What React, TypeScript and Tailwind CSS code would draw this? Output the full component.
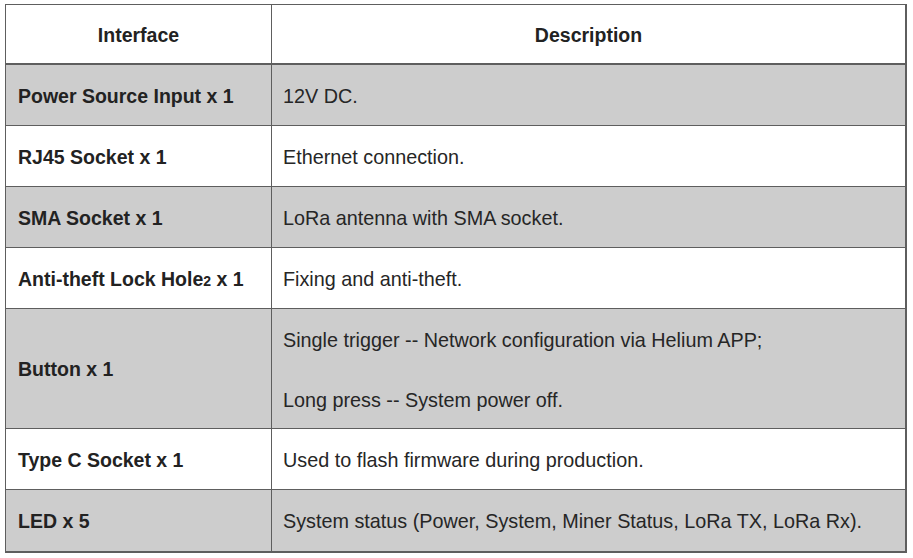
import React from "react";

type Row = { name: React.ReactNode; desc: React.ReactNode; gray: boolean; h: string };

const rows: Row[] = [
  { name: "Power Source Input x 1", desc: "12V DC.", gray: true, h: "h-[61px]" },
  { name: "RJ45 Socket x 1", desc: "Ethernet connection.", gray: false, h: "h-[61px]" },
  { name: "SMA Socket x 1", desc: "LoRa antenna with SMA socket.", gray: true, h: "h-[61px]" },
  {
    name: (
      <span>
        Anti-theft Lock Hole<span className="text-[14px]">2</span> x 1
      </span>
    ),
    desc: "Fixing and anti-theft.",
    gray: false,
    h: "h-[61px]",
  },
  {
    name: "Button x 1",
    desc: (
      <div className="flex flex-col gap-[37px] leading-[23px]">
        <span>Single trigger -- Network configuration via Helium APP;</span>
        <span>Long press -- System power off.</span>
      </div>
    ),
    gray: true,
    h: "h-[120px]",
  },
  { name: "Type C Socket x 1", desc: "Used to flash firmware during production.", gray: false, h: "h-[61px]" },
  {
    name: "LED x 5",
    desc: "System status (Power, System, Miner Status, LoRa TX, LoRa Rx).",
    gray: true,
    h: "h-[61px]",
  },
];

export default function App() {
  return (
    <div className="w-[913px] h-[558px] bg-white pt-[4px] pl-[5px] font-['Liberation_Sans',Arial,sans-serif] text-[#222]">
      <div className="w-[902px] border border-[#5e5e5e] border-r-2 border-b-2">
        <div className="grid grid-cols-[266px_1fr] h-[60px] border-b-2 border-[#5e5e5e] font-bold text-[19.5px]">
          <div className="flex items-center justify-center pt-[3px] border-r border-[#5e5e5e]">Interface</div>
          <div className="flex items-center justify-center pt-[3px]">Description</div>
        </div>
        {rows.map((r, i) => (
          <div
            key={i}
            className={`grid grid-cols-[266px_1fr] ${r.h} ${i < rows.length - 1 ? "border-b border-[#5e5e5e]" : ""} ${
              r.gray ? "bg-[#cdcdcd]" : "bg-white"
            }`}
          >
            <div className="flex items-center pl-[12px] pt-[3px] border-r border-[#5e5e5e] font-bold text-[19.5px]">{r.name}</div>
            <div className="flex items-center pl-[11px] pt-[3px] text-[#262626] text-[19.8px]">{r.desc}</div>
          </div>
        ))}
      </div>
    </div>
  );
}
